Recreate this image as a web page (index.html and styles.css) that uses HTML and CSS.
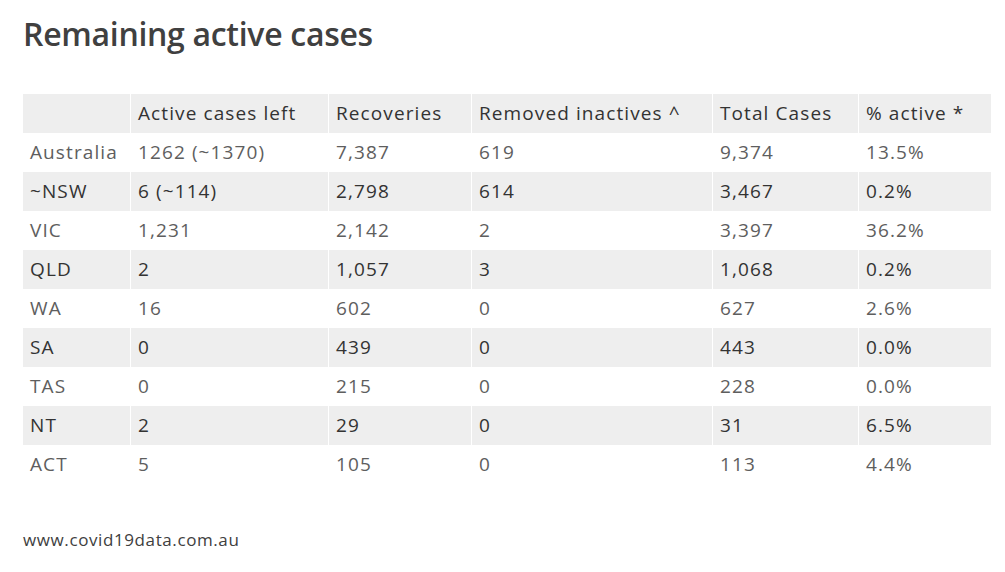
FILE: index.html
```html
<!DOCTYPE html>
<html lang="en">
<head>
<meta charset="utf-8">
<title>Remaining active cases</title>
<link rel="stylesheet" href="styles.css">
</head>
<body>
<div class="page">
  <h1 class="title">Remaining active cases</h1>
  <table class="cases">
    <colgroup>
      <col class="c1"><col class="c2"><col class="c3"><col class="c4"><col class="c5"><col class="c6">
    </colgroup>
    <thead>
      <tr class="shade"><th></th><th>Active cases left</th><th>Recoveries</th><th>Removed inactives ^</th><th>Total Cases</th><th>% active *</th></tr>
    </thead>
    <tbody>
      <tr class="plain"><td>Australia</td><td>1262 (~1370)</td><td>7,387</td><td>619</td><td>9,374</td><td>13.5%</td></tr>
      <tr class="shade"><td>~NSW</td><td>6 (~114)</td><td>2,798</td><td>614</td><td>3,467</td><td>0.2%</td></tr>
      <tr class="plain"><td>VIC</td><td>1,231</td><td>2,142</td><td>2</td><td>3,397</td><td>36.2%</td></tr>
      <tr class="shade"><td>QLD</td><td>2</td><td>1,057</td><td>3</td><td>1,068</td><td>0.2%</td></tr>
      <tr class="plain"><td>WA</td><td>16</td><td>602</td><td>0</td><td>627</td><td>2.6%</td></tr>
      <tr class="shade"><td>SA</td><td>0</td><td>439</td><td>0</td><td>443</td><td>0.0%</td></tr>
      <tr class="plain"><td>TAS</td><td>0</td><td>215</td><td>0</td><td>228</td><td>0.0%</td></tr>
      <tr class="shade"><td>NT</td><td>2</td><td>29</td><td>0</td><td>31</td><td>6.5%</td></tr>
      <tr class="plain"><td>ACT</td><td>5</td><td>105</td><td>0</td><td>113</td><td>4.4%</td></tr>
    </tbody>
  </table>
  <p class="source">www.covid19data.com.au</p>
</div>
</body>
</html>
```
FILE: styles.css
```css
html, body {
  margin: 0;
  padding: 0;
  background: #ffffff;
}

body {
  font-family: "Open Sans", "Noto Sans", "Liberation Sans", sans-serif;
}

.page {
  padding: 14px 14px 0 23px;
}

.title {
  margin: 0;
  font-size: 32px;
  line-height: 40px;
  font-weight: 600;
  letter-spacing: -0.3px;
  color: #404040;
}

.cases {
  margin-top: 40px;
  width: 968px;
  table-layout: fixed;
  border-collapse: separate;
  border-spacing: 0;
  font-size: 19px;
  letter-spacing: 1.1px;
}

.c1 { width: 107px; }
.c2 { width: 198px; }
.c3 { width: 143px; }
.c4 { width: 241px; }
.c5 { width: 146px; }
.c6 { width: 133px; }

.cases th,
.cases td {
  height: 39px;
  padding: 0 0 0 7px;
  line-height: 39px;
  text-align: left;
  font-weight: 400;
  white-space: nowrap;
  vertical-align: middle;
}

.cases th + th,
.cases td + td {
  border-left: 1px solid #ffffff;
}

.shade {
  background: #eeeeee;
  color: #333333;
}

.plain {
  background: #ffffff;
  color: #5e5e5e;
}

.source {
  margin: 44px 0 0 0;
  font-size: 17px;
  line-height: 24px;
  font-weight: 500;
  letter-spacing: 0.6px;
  color: #404040;
}
```
